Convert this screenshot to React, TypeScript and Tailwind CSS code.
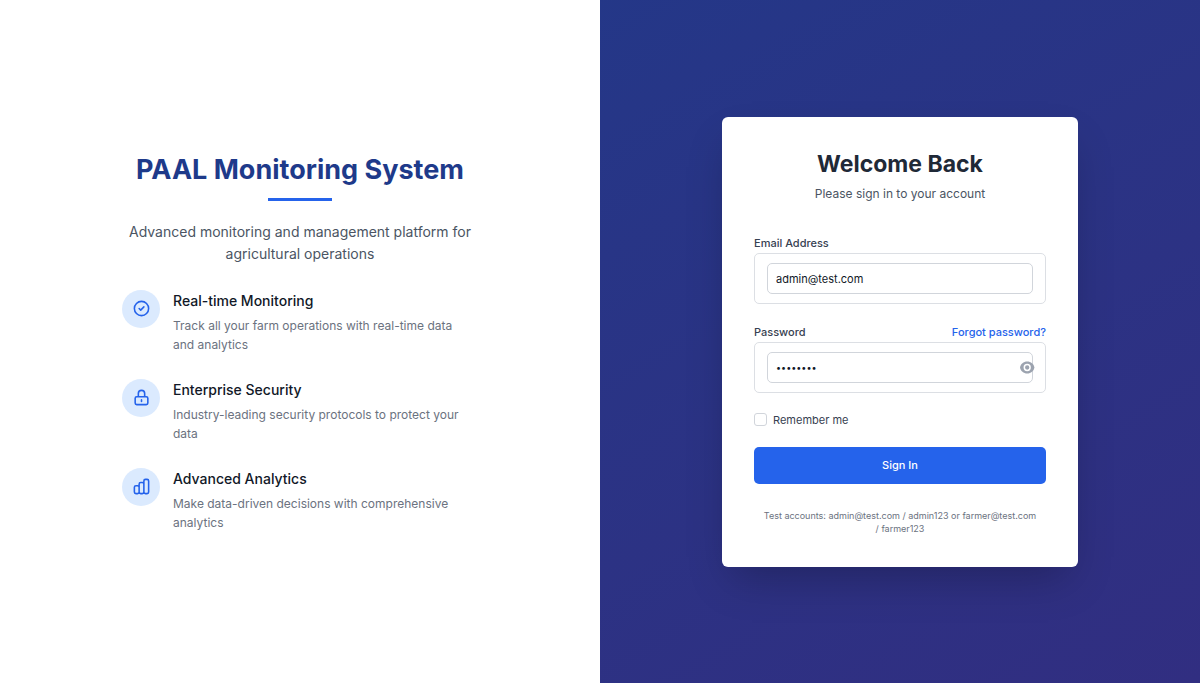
import { useState } from "react";

const features = [
  {
    title: "Real-time Monitoring",
    text: "Track all your farm operations with real-time data and analytics",
    path: "M9 12l2 2 4-4m6 2a9 9 0 11-18 0 9 9 0 0118 0z",
  },
  {
    title: "Enterprise Security",
    text: "Industry-leading security protocols to protect your data",
    path: "M12 15v2m-6 4h12a2 2 0 002-2v-6a2 2 0 00-2-2H6a2 2 0 00-2 2v6a2 2 0 002 2zm10-10V7a4 4 0 00-8 0v4h8z",
  },
  {
    title: "Advanced Analytics",
    text: "Make data-driven decisions with comprehensive analytics",
    path: "M9 19v-6a2 2 0 00-2-2H5a2 2 0 00-2 2v6a2 2 0 002 2h2a2 2 0 002-2zm0 0V9a2 2 0 012-2h2a2 2 0 012 2v10m-6 0a2 2 0 002 2h2a2 2 0 002-2m0 0V5a2 2 0 012-2h2a2 2 0 012 2v14a2 2 0 01-2 2h-2a2 2 0 01-2-2z",
  },
];

function Intro() {
  return (
    <section className="flex items-center justify-center bg-white">
      <div className="w-full max-w-[356px]">
        <div className="text-center">
          <h1 className="text-[27px] leading-9 font-bold text-[#1e3a8a]">PAAL Monitoring System</h1>
          <div className="mx-auto mt-2.5 h-[3px] w-16 bg-[#2563eb]" />
          <p className="mt-5 text-[14px] leading-[22px] text-[#4b5563]">
            Advanced monitoring and management platform for agricultural operations
          </p>
        </div>
        <ul className="mt-[25px] flex flex-col gap-[25px]">
          {features.map((f) => (
            <li key={f.title} className="flex items-start gap-[13px]">
              <span className="flex size-[38px] shrink-0 items-center justify-center rounded-full bg-[#dbeafe] text-[#2563eb]">
                <svg
                  className="size-[19px]"
                  viewBox="0 0 24 24"
                  fill="none"
                  stroke="currentColor"
                  strokeWidth="2"
                  strokeLinecap="round"
                  strokeLinejoin="round"
                  aria-hidden="true"
                >
                  <path d={f.path} />
                </svg>
              </span>
              <div className="pr-3">
                <h2 className="text-[14px] leading-[22px] font-medium text-[#111827]">{f.title}</h2>
                <p className="mt-1 text-[12px] leading-[19px] text-[#6b7280]">{f.text}</p>
              </div>
            </li>
          ))}
        </ul>
      </div>
    </section>
  );
}

function SignInCard() {
  const [visible, setVisible] = useState(false);
  return (
    <form
      onSubmit={(e) => e.preventDefault()}
      className="w-full max-w-[356px] rounded-md bg-white p-8 shadow-[0_20px_40px_-10px_rgba(0,0,0,0.25)]"
    >
      <h2 className="text-center text-[23px] leading-[31px] font-bold text-[#1f2937]">Welcome Back</h2>
      <p className="mt-1 text-center text-[12px] leading-[19px] text-[#4b5563]">Please sign in to your account</p>

      <div className="mt-8 flex flex-col gap-5">
        <div>
          <label htmlFor="email" className="block text-[11px] leading-4 font-medium text-[#374151]">
            Email Address
          </label>
          <div className="mt-0.5 rounded-[5px] border border-[#dcdfe4] px-3 py-[9px]">
            <input
              id="email"
              type="email"
              defaultValue="admin@test.com"
              className="block h-[31px] w-full rounded-[5px] border border-[#d1d5db] px-2 pt-0.5 text-[11px] text-[#111827] outline-none"
            />
          </div>
        </div>

        <div>
          <div className="flex justify-between text-[11px] leading-4 font-medium">
            <label htmlFor="password" className="text-[#374151]">
              Password
            </label>
            <a href="#forgot" className="text-[#2563eb]">
              Forgot password?
            </a>
          </div>
          <div className="relative mt-0.5 rounded-[5px] border border-[#dcdfe4] px-3 py-[9px]">
            <input
              id="password"
              type={visible ? "text" : "password"}
              defaultValue="admin123"
              className={
                visible
                  ? "block h-[31px] w-full rounded-[5px] border border-[#d1d5db] px-2 text-[11px] text-[#111827] outline-none"
                  : "block h-[31px] w-full rounded-[5px] border border-[#d1d5db] px-2 text-[9px] text-[#111827] outline-none"
              }
            />
            <button
              type="button"
              aria-label="Show password"
              onClick={() => setVisible(!visible)}
              className="absolute inset-y-0 right-2.5 flex items-center text-[#9ca3af]"
            >
              <svg className="size-4" viewBox="0 0 16 16" fill="none" aria-hidden="true">
                <path
                  fill="currentColor"
                  d="M1 8.5C1.600 5 4.500 2.500 8.200 2.500s6.600 2.500 7.200 6c-.6 3.500-3.500 6-7.200 6S1.600 12 1 8.500z"
                />
                <circle cx="8.200" cy="8.500" r="2.900" stroke="#fff" strokeWidth="1.500" />
              </svg>
            </button>
          </div>
        </div>

        <label className="flex h-3.5 items-center gap-1.5 text-[11px] leading-3.5 text-[#374151]">
          <input
            type="checkbox"
            className="size-[13px] appearance-none rounded-[3px] border border-[#d1d5db] bg-white checked:bg-[#2563eb]"
          />
          Remember me
        </label>

        <button type="submit" className="h-[37px] rounded-[5px] bg-[#2563eb] text-[11px] font-medium text-white">
          Sign In
        </button>
      </div>

      <p className="mt-[25px] text-center text-[9px] leading-[13px] text-[#6b7280]">
        Test accounts: admin@test.com / admin123 or farmer@test.com /&nbsp;farmer123
      </p>
    </form>
  );
}

export default function App() {
  return (
    <main className="grid min-h-screen grid-cols-2 bg-linear-to-br from-[#1e3a8a] to-[#312e81] font-['Inter',sans-serif]">
      <Intro />
      <section className="flex items-center justify-center">
        <SignInCard />
      </section>
    </main>
  );
}
